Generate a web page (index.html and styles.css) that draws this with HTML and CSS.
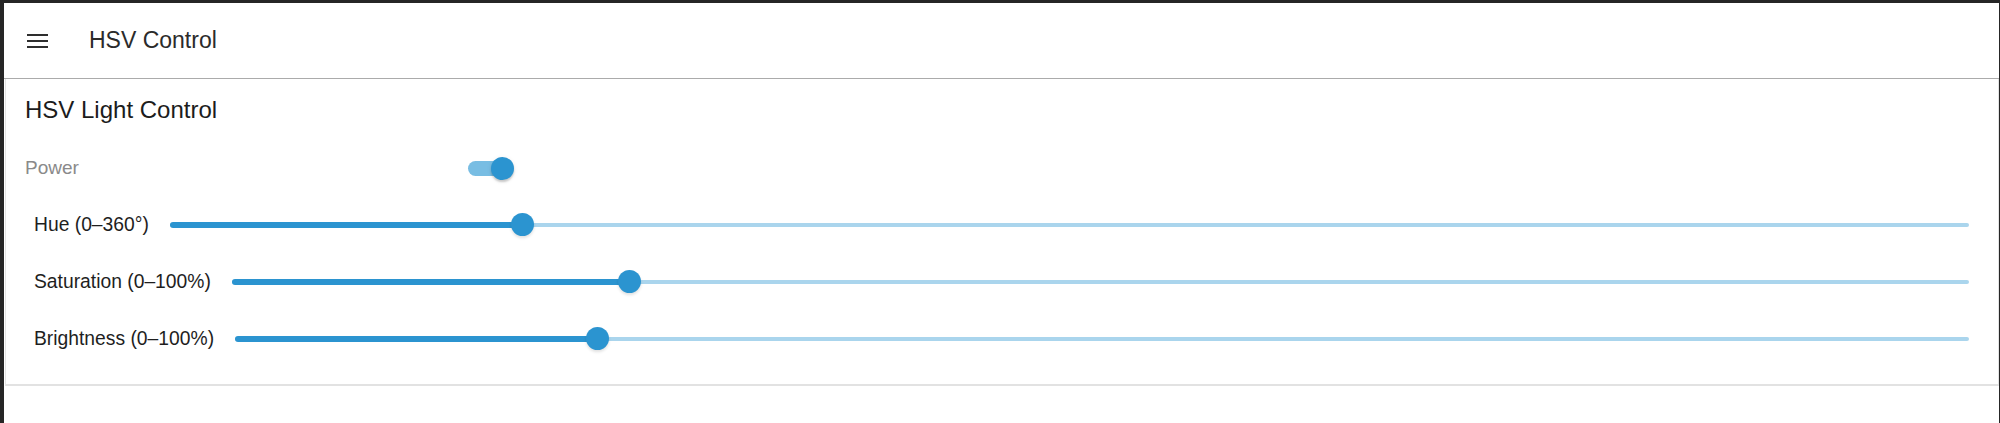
FILE: index.html
```html
<!DOCTYPE html>
<html lang="en">
<head>
    <meta charset="UTF-8">
    <meta name="viewport" content="width=device-width, initial-scale=1.0">
    <title>HSV Control</title>
    <link rel="stylesheet" href="styles.css">
</head>
<body>
    <div class="window">
        <div class="appbar">
            <span class="menu-btn">
                <svg width="21" height="15" viewBox="0 0 21 15">
                    <rect x="0" y="1" width="21" height="2" fill="#2e2e2e"/>
                    <rect x="0" y="7" width="21" height="2" fill="#2e2e2e"/>
                    <rect x="0" y="13" width="21" height="2" fill="#2e2e2e"/>
                </svg>
            </span>
            <span class="appbar-title">HSV Control</span>
        </div>

        <div class="card">
            <div class="card-title">HSV Light Control</div>

            <div class="power-row">
                <span class="power-label">Power</span>
                <span class="switch">
                    <span class="switch-track"></span>
                    <span class="switch-thumb"></span>
                </span>
            </div>

            <div class="slider-row">
                <span class="slider-label">Hue (0–360°)</span>
                <div class="slider">
                    <div class="slider-rail"></div>
                    <div class="slider-track" style="width: 19.6%"></div>
                    <div class="slider-thumb" style="left: 19.6%"></div>
                </div>
            </div>
            <div class="slider-row">
                <span class="slider-label">Saturation (0–100%)</span>
                <div class="slider">
                    <div class="slider-rail"></div>
                    <div class="slider-track" style="width: 22.9%"></div>
                    <div class="slider-thumb" style="left: 22.9%"></div>
                </div>
            </div>
            <div class="slider-row">
                <span class="slider-label">Brightness (0–100%)</span>
                <div class="slider">
                    <div class="slider-rail"></div>
                    <div class="slider-track" style="width: 20.9%"></div>
                    <div class="slider-thumb" style="left: 20.9%"></div>
                </div>
            </div>
        </div>
    </div>
</body>
</html>
```

FILE: styles.css
```css
*{
    margin: 0;
    padding: 0;
    box-sizing: border-box;
}
body{
    background: #262626;
    font-family: "Liberation Sans", Arial, sans-serif;
}
.window{
    margin: 3px 1px 0 4px;
    height: 420px;
    background: #fff;
}

/* top bar */
.appbar{
    height: 76px;
    display: flex;
    align-items: center;
    padding-left: 23px;
    border-bottom: 1px solid #ababab;
}
.menu-btn{
    display: flex;
    width: 21px;
    height: 15px;
}
.appbar-title{
    margin-left: 41px;
    font-size: 23px;
    color: #2b2b2b;
}

/* card */
.card{
    margin-left: 1px;
    padding: 17px 18px 17px 19px;
    border-left: 1px solid #e4e4e4;
    border-right: 1px solid #e4e4e4;
    border-bottom: 2px solid #e2e2e2;
}
.card-title{
    font-size: 24px;
    line-height: 27px;
    color: #1c1c1c;
}

.power-row{
    margin-top: 25px;
    height: 40px;
    display: flex;
    align-items: center;
}
.power-label{
    width: 443px;
    font-size: 19px;
    color: #8a8a8a;
}
.switch{
    position: relative;
    width: 46px;
    height: 23px;
    display: flex;
    align-items: center;
}
.switch-track{
    width: 40px;
    height: 15px;
    border-radius: 8px;
    background: #78bde3;
}
.switch-thumb{
    position: absolute;
    right: 0;
    top: 0;
    width: 23px;
    height: 23px;
    border-radius: 50%;
    background: #2b94d0;
    box-shadow: 0 2px 2px rgba(0, 0, 0, 0.18), 0 1px 5px rgba(0, 0, 0, 0.08);
}

/* sliders */
.slider-row{
    height: 57px;
    display: flex;
    align-items: center;
    padding: 0 11px 0 9px;
}
.power-row + .slider-row{
    margin-top: 8px;
}
.slider-label{
    font-size: 19.3px;
    color: #1e1e1e;
    white-space: nowrap;
    margin-right: 21px;
}
.slider{
    position: relative;
    flex: 1;
    height: 23px;
}
.slider-rail{
    position: absolute;
    left: 0;
    right: 0;
    top: 9.5px;
    height: 4px;
    border-radius: 2px;
    background: #aad5ed;
}
.slider-track{
    position: absolute;
    left: 0;
    top: 8.5px;
    height: 6px;
    border-radius: 3px;
    background: #2b94d0;
}
.slider-thumb{
    position: absolute;
    top: 0;
    width: 23px;
    height: 23px;
    margin-left: -11.5px;
    border-radius: 50%;
    background: #2b94d0;
    box-shadow: 0 2px 3px rgba(0, 0, 0, 0.12);
}
```
